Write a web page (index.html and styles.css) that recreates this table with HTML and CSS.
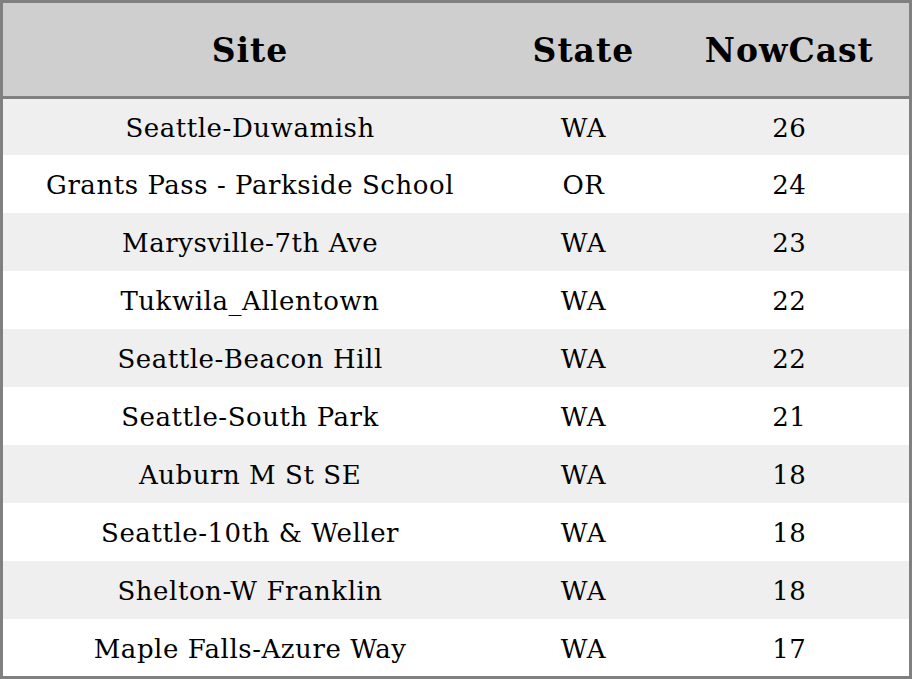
FILE: index.html
```html
<!DOCTYPE html>
<html>
<head>
<meta charset="utf-8">
<link rel="stylesheet" href="styles.css">
</head>
<body>
<table class="aq">
  <colgroup><col class="c-site"><col class="c-state"><col class="c-now"></colgroup>
  <thead>
    <tr><th>Site</th><th>State</th><th>NowCast</th></tr>
  </thead>
  <tbody>
    <tr><td>Seattle-Duwamish</td><td>WA</td><td>26</td></tr>
    <tr><td>Grants Pass - Parkside School</td><td>OR</td><td>24</td></tr>
    <tr><td>Marysville-7th Ave</td><td>WA</td><td>23</td></tr>
    <tr><td>Tukwila_Allentown</td><td>WA</td><td>22</td></tr>
    <tr><td>Seattle-Beacon Hill</td><td>WA</td><td>22</td></tr>
    <tr><td>Seattle-South Park</td><td>WA</td><td>21</td></tr>
    <tr><td>Auburn M St SE</td><td>WA</td><td>18</td></tr>
    <tr><td>Seattle-10th &amp; Weller</td><td>WA</td><td>18</td></tr>
    <tr><td>Shelton-W Franklin</td><td>WA</td><td>18</td></tr>
    <tr><td>Maple Falls-Azure Way</td><td>WA</td><td>17</td></tr>
  </tbody>
</table>
</body>
</html>
```

FILE: styles.css
```css
html, body {
  margin: 0;
  padding: 0;
  background: #ffffff;
}
.aq {
  width: 912px;
  border-collapse: collapse;
  table-layout: fixed;
  border: 3px solid #808080;
  font-family: "DejaVu Serif", serif;
  color: #000;
}
.c-site { width: 494px; }
.c-state { width: 172px; }
.c-now { width: 240px; }
.aq th {
  height: 92px;
  padding: 1px 0 0;
  background: #cfcfcf;
  font-size: 33px;
  font-weight: bold;
  letter-spacing: 1px;
  text-align: center;
  border-bottom: 3px solid #808080;
}
.aq td {
  height: 56px;
  padding: 2px 0 0;
  font-size: 26px;
  letter-spacing: 0.55px;
  text-align: center;
}
.aq tbody tr:first-child td { height: 54px; }
.aq tbody tr:last-child td { height: 55px; }
.aq tbody tr:nth-child(odd) td {
  background: #efefef;
}
```
